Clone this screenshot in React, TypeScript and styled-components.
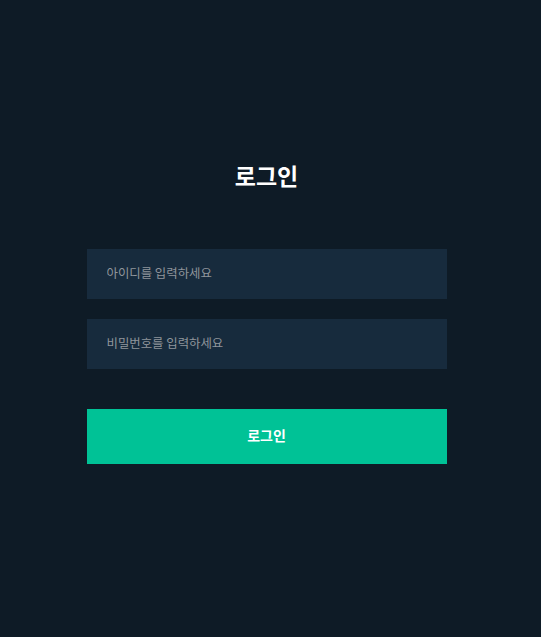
import React from 'react'
import styled, { createGlobalStyle } from 'styled-components'

const GlobalStyle = createGlobalStyle`
  html, body {
    margin: 0;
    padding: 0;
    background: #0e1b26;
  }
  body {
    font-family: "Noto Sans CJK KR", "Noto Sans", sans-serif;
  }
  * { box-sizing: border-box; }
`

const Page = styled.div`
  min-height: 637px;
  display: flex;
  justify-content: center;
  padding: 158px 8px 0 0;
`

const Form = styled.form`
  width: 360px;
  display: flex;
  flex-direction: column;
`

const Title = styled.h1`
  margin: 0 0 57px;
  text-align: center;
  color: #ffffff;
  font-size: 23px;
  font-weight: 700;
  line-height: 34px;
`

const Input = styled.input`
  height: 50px;
  width: 100%;
  border: none;
  outline: none;
  background: #172b3d;
  color: #ffffff;
  padding: 0 20px 3px;
  font-family: inherit;
  font-size: 12.4px;
  margin-bottom: 20px;

  &::placeholder {
    color: #8f959b;
  }
`

const Submit = styled.button`
  margin-top: 20px;
  height: 55px;
  border: none;
  padding: 0 0 3px;
  background: #00c296;
  color: #ffffff;
  font-family: inherit;
  font-size: 14px;
  font-weight: 700;
  cursor: pointer;
`

export default function App() {
  return (
    <>
      <GlobalStyle />
      <Page>
        <Form onSubmit={e => e.preventDefault()}>
          <Title>로그인</Title>
          <Input type="text" placeholder="아이디를 입력하세요" />
          <Input type="password" placeholder="비밀번호를 입력하세요" />
          <Submit type="submit">로그인</Submit>
        </Form>
      </Page>
    </>
  )
}
